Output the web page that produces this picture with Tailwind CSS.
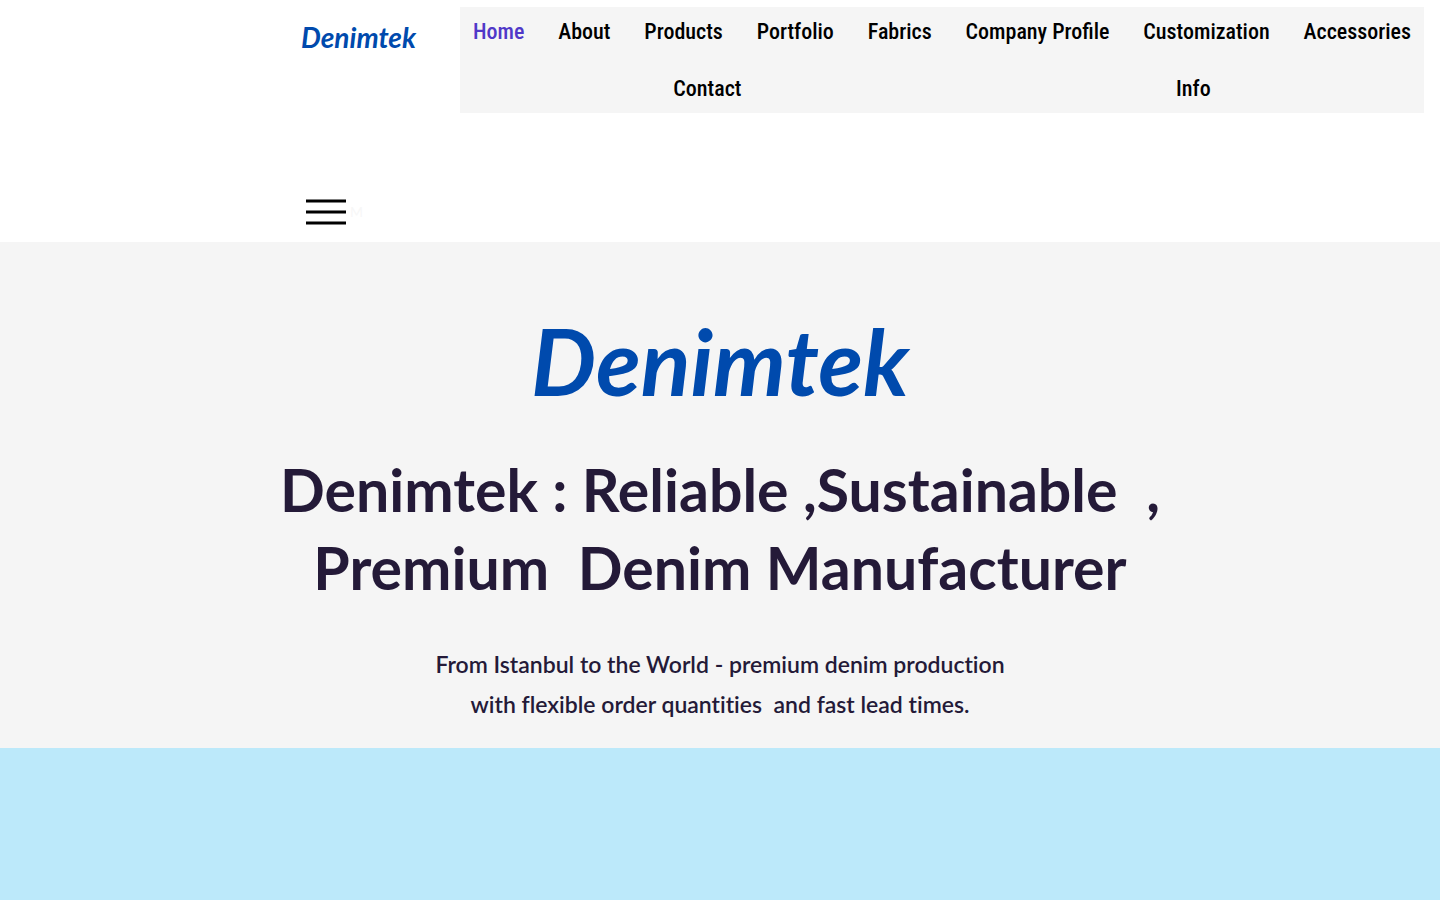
<!DOCTYPE html>
<html lang="en">
<head>
    <meta charset="UTF-8">
    <meta name="viewport" content="width=device-width, initial-scale=1.0">
    <title>Denimtek</title>
    <script src="https://cdn.jsdelivr.net/npm/@tailwindcss/browser@4"></script>
</head>
<body class="bg-[#bce9fa] min-h-screen font-['Lato',sans-serif]">

    <!-- Header -->
    <header class="bg-white">
        <div class="flex items-start pt-[7px] pr-4">
            <div class="flex flex-1 justify-end pr-11">
                <a href="#" class="mt-2 text-[28px] leading-[44px] font-bold italic text-[#004aad]">Denimtek</a>
            </div>
            <nav class="w-[964px] max-w-full bg-[#f5f5f5] font-['Liberation_Sans_Narrow','Roboto_Condensed',sans-serif]">
                <ul class="flex flex-wrap gap-2 text-center text-[22px] leading-[49px] font-medium text-black">
                    <li class="grow"><a href="#" class="block px-3 text-[#5038c8]">Home</a></li>
                    <li class="grow"><a href="#" class="block px-3">About</a></li>
                    <li class="grow"><a href="#" class="block px-3">Products</a></li>
                    <li class="grow"><a href="#" class="block px-3">Portfolio</a></li>
                    <li class="grow"><a href="#" class="block px-3">Fabrics</a></li>
                    <li class="grow"><a href="#" class="block px-3">Company Profile</a></li>
                    <li class="grow"><a href="#" class="block px-3">Customization</a></li>
                    <li class="grow"><a href="#" class="block px-3">Accessories</a></li>
                    <li class="grow"><a href="#" class="block px-3">Contact</a></li>
                    <li class="grow"><a href="#" class="block px-3">Info</a></li>
                </ul>
            </nav>
        </div>
        <div class="mx-auto flex max-w-[828px] items-center gap-1 pt-[84px] pb-[15px]">
            <button type="button" aria-label="Open menu" class="block">
                <svg width="40" height="30" viewBox="0 0 40 30" fill="none" stroke="#000" stroke-width="3">
                    <path d="M0 4h40M0 15h40M0 26h40" />
                </svg>
            </button>
            <span class="text-sm leading-4 text-[#f7f7f7]">M</span>
        </div>
    </header>

    <!-- Hero -->
    <section class="bg-[#f5f5f5] px-4 pt-[54px] pb-6 text-center text-[#241a38]">
        <p class="text-[92px] leading-[130px] font-bold italic text-[#004aad]">Denimtek</p>
        <h1 class="mt-[25px] text-[59px] leading-[78px] font-bold">Denimtek : Reliable ,Sustainable&nbsp; ,<br>Premium&nbsp; Denim Manufacturer</h1>
        <p class="mt-[37px] text-[23px] leading-10 font-semibold [font-variant-ligatures:none]">From Istanbul to the World - premium denim production<br>with flexible order quantities&nbsp; and fast lead times.</p>
    </section>

</body>
</html>
